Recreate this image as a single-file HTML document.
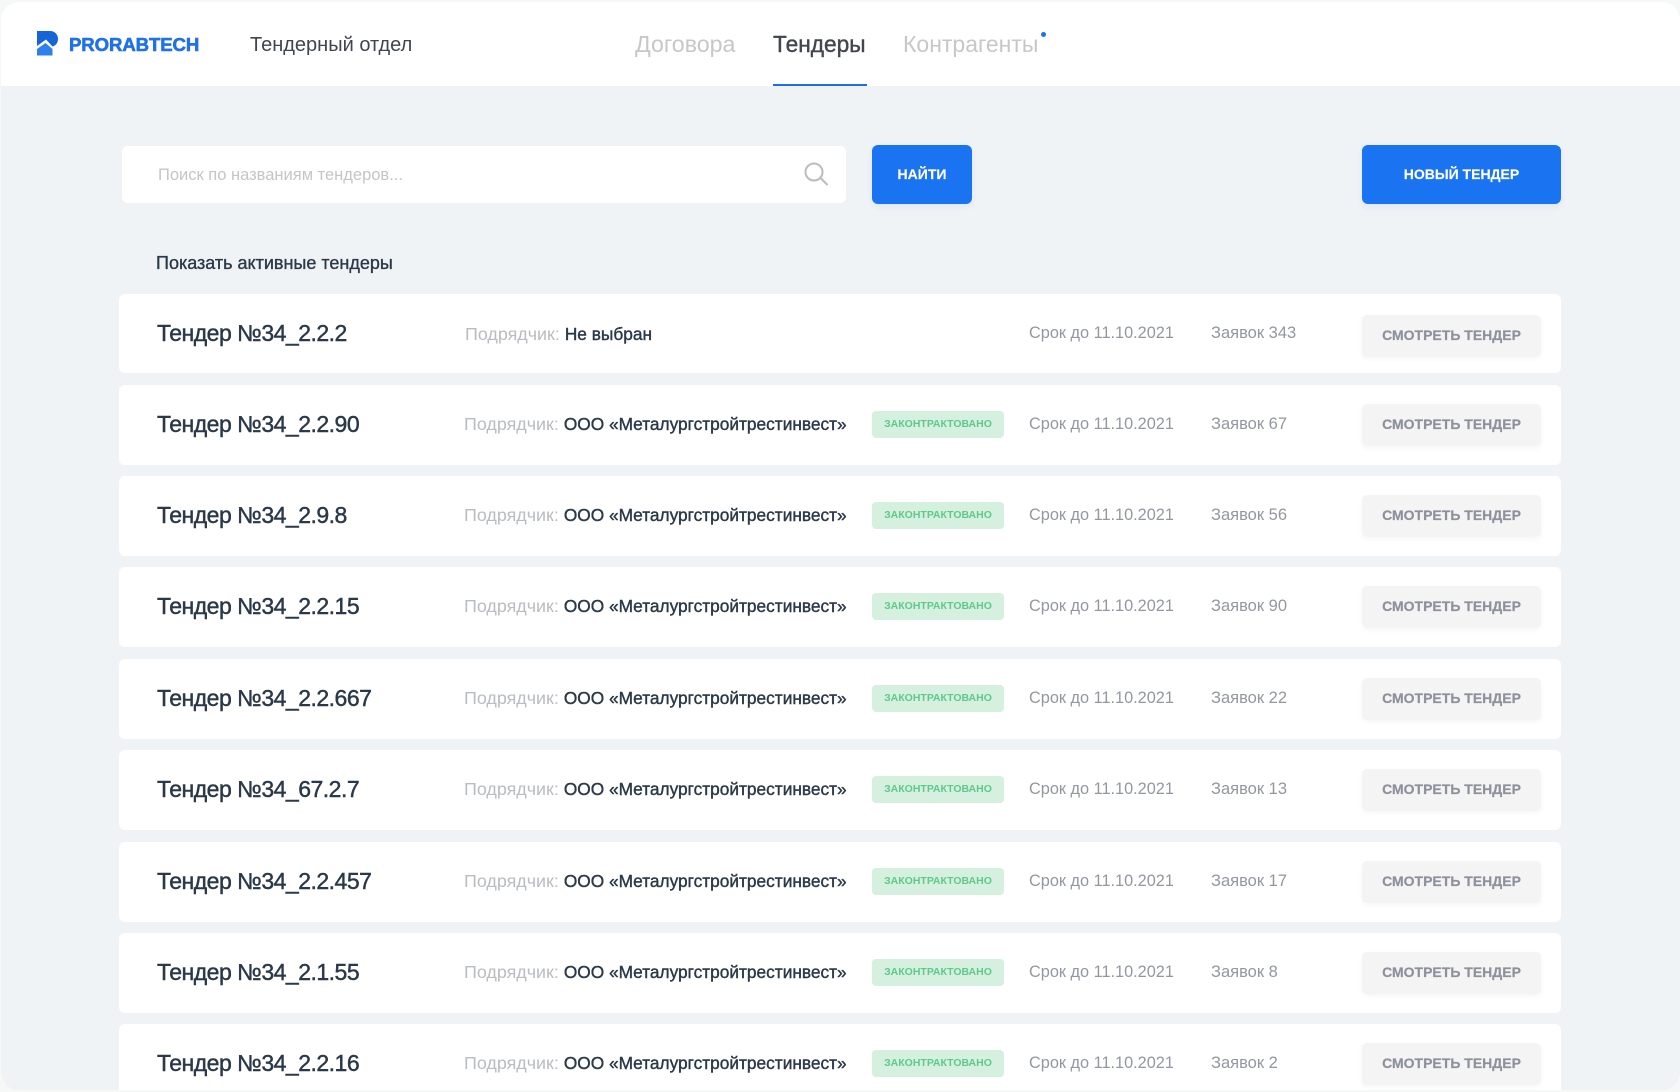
<!DOCTYPE html>
<html lang="ru"><head><meta charset="utf-8"><title>Тендеры</title>
<style>
*{box-sizing:border-box}
html,body{margin:0;padding:0;width:1680px;height:1092px;overflow:hidden;background:#f6f7f7;font-family:"Liberation Sans","DejaVu Sans",sans-serif}
.frame{position:absolute;left:1px;top:2px;width:1679px;height:1088px;border-radius:18px;background:#f0f3f6;overflow:hidden}
.t{position:absolute;white-space:nowrap;line-height:1}
.hd{position:absolute;left:0;top:0;width:1679px;height:84px;background:#fff}
.blue{background:#1a73f0;border-radius:6px;position:absolute;box-shadow:0 3px 8px rgba(26,115,240,.08);color:#fff;font-weight:700;font-size:14px;text-align:center;line-height:58px;-webkit-text-stroke:.15px #fff}
.row{position:absolute;left:118px;width:1442px;height:79.5px;background:#fff;border-radius:6px}
.n{position:absolute;left:38px;top:26px;font-size:23px;line-height:26px;letter-spacing:-.5px;color:#2b3848;-webkit-text-stroke:.45px #2b3848;white-space:nowrap}
.p{position:absolute;left:345px;top:29px;font-size:17.9px;line-height:20px;color:#b9bcc0;white-space:nowrap}
.p b{color:#2b3848;font-weight:400;font-size:17.3px;-webkit-text-stroke:.4px #2b3848;margin-left:0}
.g{position:absolute;left:753px;top:26px;width:132px;height:27px;border-radius:4px;background:#d6f0e0;color:#5fc98a;font-weight:700;font-size:10.5px;line-height:27px;text-align:center}
.d{position:absolute;left:910px;top:29px;font-size:16.3px;line-height:20px;color:#93979f;white-space:nowrap}
.z{position:absolute;left:1092px;top:29px;font-size:16.5px;line-height:20px;color:#93979f;white-space:nowrap}
.b{position:absolute;left:1243px;top:19px;width:179px;height:42px;border-radius:5px;background:#f4f4f5;box-shadow:0 2px 6px rgba(0,0,0,.04);color:#8e919b;font-weight:700;font-size:14px;line-height:40px;text-align:center;-webkit-text-stroke:.2px #8e919b}
</style></head><body>
<div class="frame">
<div class="hd"></div>
<svg style="position:absolute;left:35px;top:27px" width="24" height="28" viewBox="0 0 24 28"><path fill="#1565d8" d="M1 2H14C19 2 22 5.5 22 10C22 13.5 20 16.5 16.5 17.5L10 10.5L1 17Z"/><path fill="#2f80ed" d="M9.5 14L16.5 20V26.5H1V20Z"/></svg>
<div class="t" style="left:68px;top:34px;font-size:18.6px;font-weight:700;color:#2070e6;letter-spacing:-.1px;-webkit-text-stroke:.6px #2070e6">PRORABTECH</div>
<div class="t" style="left:249px;top:33px;font-size:20px;color:#3f4650">Тендерный отдел</div>
<div class="t" style="left:634px;top:31px;font-size:23.2px;color:#c6c7c9">Договора</div>
<div class="t" style="left:772px;top:31px;font-size:22.7px;color:#43474d;-webkit-text-stroke:.4px #43474d">Тендеры</div>
<div class="t" style="left:902px;top:31px;font-size:23px;color:#c6c7c9">Контрагенты</div>
<div style="position:absolute;left:1040px;top:30px;width:5px;height:5px;border-radius:50%;background:#1a73f0"></div>
<div style="position:absolute;left:772px;top:81.5px;width:94px;height:2.5px;background:#1a6fe8"></div>

<div style="position:absolute;left:121px;top:143.5px;width:724px;height:57px;background:#fff;border-radius:6px"></div>
<div class="t" style="left:157px;top:165px;font-size:16.5px;color:#c3c5c8">Поиск по названиям тендеров...</div>
<svg style="position:absolute;left:802px;top:158px" width="28" height="28" viewBox="0 0 28 28" fill="none" stroke="#bcbcbc" stroke-width="2"><circle cx="11" cy="12" r="8.5"/><path d="M17.5 18L24 24.5" stroke-linecap="round"/></svg>
<div class="blue" style="left:871px;top:142.5px;width:100px;height:59px">НАЙТИ</div>
<div class="blue" style="left:1361px;top:142.5px;width:199px;height:59px">НОВЫЙ ТЕНДЕР</div>
<div class="t" style="left:155px;top:252px;font-size:18px;color:#2b3848;-webkit-text-stroke:.35px #2b3848">Показать активные тендеры</div>

<div class="row" style="top:291.5px"><div class="n">Тендер №34_2.2.2</div><div class="p" style="left:346px;top:30.5px">Подрядчик: <b>Не выбран</b></div><div class="d">Срок до 11.10.2021</div><div class="z">Заявок 343</div><div class="b" style="top:21px">СМОТРЕТЬ ТЕНДЕР</div></div>
<div class="row" style="top:383px"><div class="n">Тендер №34_2.2.90</div><div class="p">Подрядчик: <b>ООО «Металургстройтрестинвест»</b></div><div class="g">ЗАКОНТРАКТОВАНО</div><div class="d">Срок до 11.10.2021</div><div class="z">Заявок 67</div><div class="b">СМОТРЕТЬ ТЕНДЕР</div></div>
<div class="row" style="top:474px"><div class="n">Тендер №34_2.9.8</div><div class="p">Подрядчик: <b>ООО «Металургстройтрестинвест»</b></div><div class="g">ЗАКОНТРАКТОВАНО</div><div class="d">Срок до 11.10.2021</div><div class="z">Заявок 56</div><div class="b">СМОТРЕТЬ ТЕНДЕР</div></div>
<div class="row" style="top:565px"><div class="n">Тендер №34_2.2.15</div><div class="p">Подрядчик: <b>ООО «Металургстройтрестинвест»</b></div><div class="g">ЗАКОНТРАКТОВАНО</div><div class="d">Срок до 11.10.2021</div><div class="z">Заявок 90</div><div class="b">СМОТРЕТЬ ТЕНДЕР</div></div>
<div class="row" style="top:657px"><div class="n">Тендер №34_2.2.667</div><div class="p">Подрядчик: <b>ООО «Металургстройтрестинвест»</b></div><div class="g">ЗАКОНТРАКТОВАНО</div><div class="d">Срок до 11.10.2021</div><div class="z">Заявок 22</div><div class="b">СМОТРЕТЬ ТЕНДЕР</div></div>
<div class="row" style="top:748px"><div class="n">Тендер №34_67.2.7</div><div class="p">Подрядчик: <b>ООО «Металургстройтрестинвест»</b></div><div class="g">ЗАКОНТРАКТОВАНО</div><div class="d">Срок до 11.10.2021</div><div class="z">Заявок 13</div><div class="b">СМОТРЕТЬ ТЕНДЕР</div></div>
<div class="row" style="top:840px"><div class="n">Тендер №34_2.2.457</div><div class="p">Подрядчик: <b>ООО «Металургстройтрестинвест»</b></div><div class="g">ЗАКОНТРАКТОВАНО</div><div class="d">Срок до 11.10.2021</div><div class="z">Заявок 17</div><div class="b">СМОТРЕТЬ ТЕНДЕР</div></div>
<div class="row" style="top:931px"><div class="n">Тендер №34_2.1.55</div><div class="p">Подрядчик: <b>ООО «Металургстройтрестинвест»</b></div><div class="g">ЗАКОНТРАКТОВАНО</div><div class="d">Срок до 11.10.2021</div><div class="z">Заявок 8</div><div class="b">СМОТРЕТЬ ТЕНДЕР</div></div>
<div class="row" style="top:1022px"><div class="n">Тендер №34_2.2.16</div><div class="p">Подрядчик: <b>ООО «Металургстройтрестинвест»</b></div><div class="g">ЗАКОНТРАКТОВАНО</div><div class="d">Срок до 11.10.2021</div><div class="z">Заявок 2</div><div class="b">СМОТРЕТЬ ТЕНДЕР</div></div>
</div>
</body></html>
